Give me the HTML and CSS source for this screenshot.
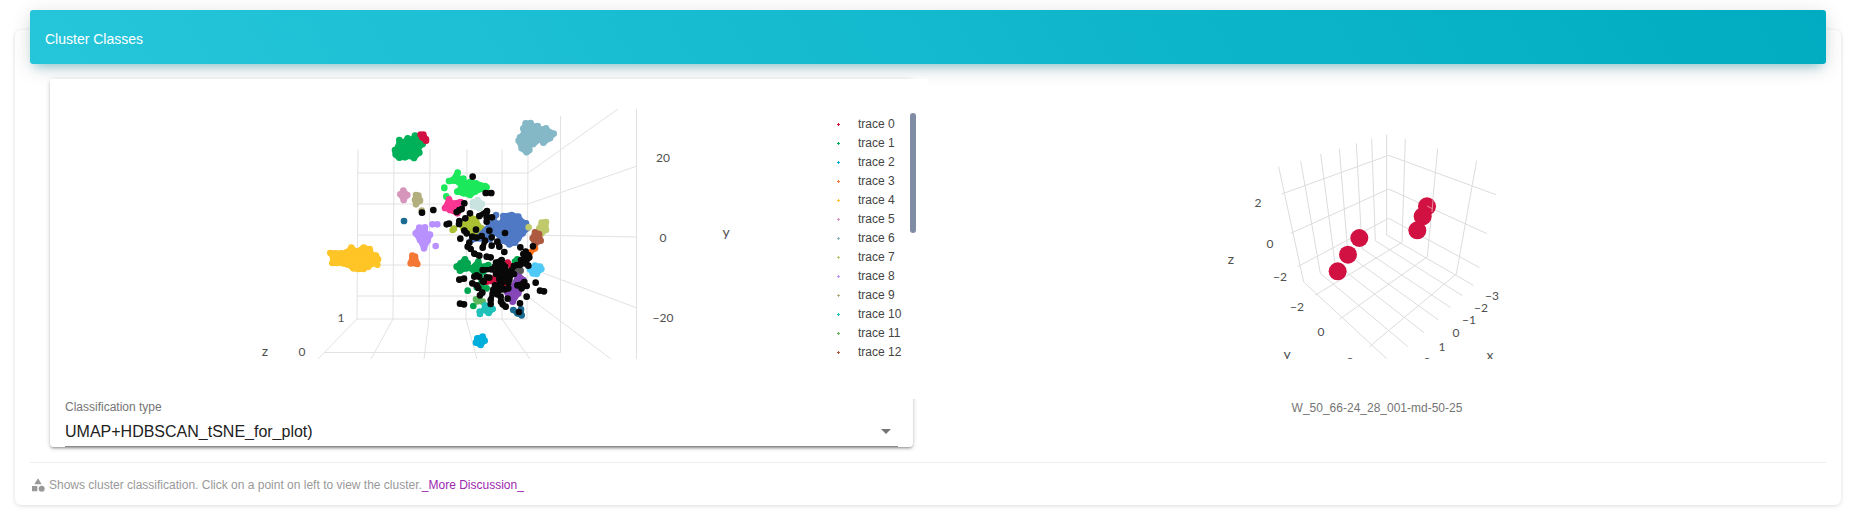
FILE: index.html
```html
<!DOCTYPE html>
<html lang="en">
<head>
<meta charset="utf-8">
<title>Cluster Classes</title>
<link rel="stylesheet" href="styles.css">
<script src="points.js" defer></script>
</head>
<body>
<main class="card">
  <header class="card-header"><h4 class="card-title">Cluster Classes</h4></header>
  <div class="card-body">
    <section class="column column-main">
      <div class="paper">
        <div class="plot">
          <svg class="scene" viewBox="50 109 780 250" role="img" aria-label="Cluster scatter plot">
            <g class="grid">
              <path d="M358 149L357 319M394 149L393 319M430 149L429 319M467 149L466 319M502 149V319M528 156L527 319M357 173H528M357 204H528M357 235H528M357 265H528M357 296H527M357 319H527"/>
              <path d="M560.500 116V352.500H324M636.500 109V359"/>
              <path d="M528 173L618 109M528 204L637 166M528 235L637 237M527 267L637 308M527 296L611 359M357 319L318 359M393 319L371 359M429 319L424 359M466 319L477 359M502 319L530 359"/>
            </g>
            <g class="axis">
              <text x="663" y="162">20</text><text x="663" y="242">0</text><text x="663" y="322">−20</text>
              <text x="341" y="322">1</text><text x="302" y="356">0</text>
              <text class="axis-title" x="726" y="237">y</text><text class="axis-title" x="265" y="356">z</text>
            </g>
            <g class="points" transform="translate(370 100) scale(.33333)">
              <path class="c-green" d="M75 150V165L88 173 105 172 120 168 132 174 148 158 145 145 158 132 150 115 135 107 125 120 113 115 100 128 88 120 85 140z"/>
              <path class="c-red" d="M152 104L160 104 168 118 168 122 156 112z"/>
              <path class="c-steel" d="M467 70L482 69 490 80 503 78 510 88 528 85 540 97 551 101 540 115 520 128 510 118 490 132 483 120 478 150 470 157 455 145 446 122 450 112 462 100 460 86z"/>
              <path class="c-lime" d="M223 263L223 264M229 289L229 290M237 243L248 240 263 218 263 235 280 236 282 250 300 246 318 250 345 258 350 262 315 275 300 285 280 280 262 275 275 260 262 244z"/>
              <path class="c-pink" d="M225 324L237 298 245 310 272 306 275 320 262 340 240 330z"/>
              <path class="c-pale" d="M323 300L336 312 328 325 309 318 309 307z"/>
              <path class="c-mauve" d="M100 272L112 285 101 300 91 283z"/>
              <path class="c-khaki" d="M138 285L145 287 150 302 138 313 135 300zM155 332h0"/>
              <path class="c-ocean" d="M102 363h0"/>
              <path class="c-violet" d="M187 373L202 373M197 438h0M148 383L165 382 168 402 180 404 173 422 162 445 150 420 137 400z"/>
              <path class="c-orange" d="M127 467L135 470 142 492 122 490z"/>
              <path class="c-yellow" d="M-119 459L-103 460 -88 460 -70 457 -56 443 -40 455 -19 443 -1 447 5 463 18 467 24 478 13 486 5 492 -5 500 -20 507 -35 507 -50 505 -68 493 -80 490 -98 489 -113 489 -110 475zM22 494h0"/>
              <path class="c-olive" d="M248 390L252 386M300 350L318 358 325 378 335 385 342 400 320 405 300 390 280 385 275 375z"/>
              <g transform="translate(210 180)">
                <path class="c-blue" d="M190 168L215 165 235 170 240 180 258 190 262 205 248 220 235 235 225 248 208 253 190 242 165 215 172 195 188 185zM168 165L160 180 165 215 150 238 120 235 95 240M170 190L150 200 150 225"/>
                <path class="c-moss" d="M266 202h0M305 188L318 186 318 210 305 220 298 205z"/>
                <path class="c-brown" d="M285 217L297 222 302 242 285 252 278 235z"/>
                <path class="c-amber" d="M285 265L270 278 262 285"/>
              </g>
              <g transform="translate(210 450)">
                <path class="c-forest" d="M50 50L62 40 75 28 83 40 78 55 60 62zM80 55L95 55 115 35 120 50 145 45 130 65 105 60 120 75 125 100 110 112 140 115M83 122h0M100 168h0M232 28L225 35"/>
                <path class="c-plum" d="M235 75L250 90 245 110 235 130 218 155 205 135 200 125 220 110z"/>
                <path class="c-red" d="M140 95L152 85 180 88 195 75 200 105 165 95zM203 38L215 50"/>
                <path class="c-grey" d="M232 55L242 62"/>
                <path class="c-sky" d="M285 47L300 50 304 57 290 72 278 70 270 58z"/>
                <path class="c-leaf" d="M108 148L128 155 112 154z"/>
                <path class="c-teal" d="M135 166L150 172 158 177 146 189 132 180zM119 185L120 192"/>
                <path class="c-ocean" d="M220 180L232 190 245 196 243 178"/>
                <path class="c-cyan" d="M112 265L128 260 134 272 122 285 108 278z"/>
              </g>
              <path class="c-black" d="M156 338h0M190 330h0"/>
              <path class="c-black" transform="translate(210 180)" d="M98 50h0M137 99L154 99M73 130h0M58 150L50 156M65 147h0M90 160h0M76 175h0M58 183L57 192M27 191L20 193M118 168L141 153M141 153L140 185M140 172L156 172M108 209h0M73 212L80 220M148 212h0M195 219h0M61 236h0M97 230L110 233M125 228h0M155 232h0M135 242L128 263M155 257h0M172 245L178 260M88 248L83 260 92 267M193 276h0M241 262h0M279 259h0M103 281L118 287M140 290L152 292M257 275L265 285 250 282 255 295"/>
              <path class="c-black" transform="translate(210 450)" d="M58 89L72 86M103 80L110 76 117 80M97 100h0M110 106L115 114M127 128L120 136M60 161L72 163M128 60L155 58 165 50 168 38 185 30M180 45L195 50 190 60 175 62 168 72M148 83L140 82M176 42L176 70M186 68L200 65 212 75 208 90 195 92 185 100M190 45L188 85M205 115L195 118 180 110 178 88M160 119L158 130 152 150 152 162M165 106L185 118M175 122L172 133M182 140L183 155 188 163 197 170M203 146h0M240 160h0M237 186h0M260 140h0M287 98h0M300 122L312 124M230 45L243 42 255 35 265 47M243 30L240 45M258 20L268 22 255 40M222 48L214 62 222 72M238 105L250 100 253 96 245 115M232 106h0M203 80L205 98M128 94L131 96M260 108h0"/>
            </g>
          </svg>
          <div class="legend">
            <ul class="legend-list">
              <li class="legend-item"><i class="mark c-red"></i>trace 0</li>
              <li class="legend-item"><i class="mark c-green"></i>trace 1</li>
              <li class="legend-item"><i class="mark c-cyan"></i>trace 2</li>
              <li class="legend-item"><i class="mark c-orange"></i>trace 3</li>
              <li class="legend-item"><i class="mark c-yellow"></i>trace 4</li>
              <li class="legend-item"><i class="mark c-mauve"></i>trace 5</li>
              <li class="legend-item"><i class="mark c-steel"></i>trace 6</li>
              <li class="legend-item"><i class="mark c-moss"></i>trace 7</li>
              <li class="legend-item"><i class="mark c-violet"></i>trace 8</li>
              <li class="legend-item"><i class="mark c-khaki"></i>trace 9</li>
              <li class="legend-item"><i class="mark c-teal"></i>trace 10</li>
              <li class="legend-item"><i class="mark c-leaf"></i>trace 11</li>
              <li class="legend-item"><i class="mark c-brown"></i>trace 12</li>
            </ul>
            <div class="legend-scroll"></div>
          </div>
        </div>
        <div class="field">
          <label class="field-label" for="type">Classification type</label>
          <select class="field-select" id="type"><option>UMAP+HDBSCAN_tSNE_for_plot)</option></select>
          <svg class="field-arrow" viewBox="0 0 24 24" aria-hidden="true"><path d="M7 10l5 5 5-5z"/></svg>
        </div>
      </div>
    </section>
    <section class="column column-detail">
      <svg class="scene-detail" viewBox="1127 109 500 250" role="img" aria-label="Selected cluster">
        <g class="grid grid-detail" transform="translate(1210 120) scale(.33333)">
          <path d="M206 140L281 486M272 122L331 460M332 102L375 430M388 86L414 405M439 70L456 385M485 56L496 362M530 44V345M586 58L576 367M683 86L652 410M800 122L739 462M215 222L536 106 858 224M242 340L536 207 831 341M263 440L536 295 809 443"/>
          <path d="M281 486L530 716M331 460L594 680M375 430L642 638M414 405L684 599M455 385L722 563M496 362L757 527M530 345L790 496M315 526L576 367M388 598L652 410M478 680L739 462"/>
        </g>
        <g class="balls" transform="translate(1210 120) scale(.33333)">
          <circle cx="383" cy="454" r="27"/><circle cx="414" cy="404" r="27"/><circle cx="448" cy="354" r="27"/>
          <circle cx="651" cy="259" r="27"/><circle cx="638" cy="289" r="27"/><circle cx="622" cy="331" r="27"/>
        </g>
        <path class="glint" d="M1427 206L1433 209M1433 200L1432 212"/>
        <g class="axis">
          <text x="1258" y="207">2</text><text x="1270" y="248">0</text><text x="1280" y="281">−2</text>
          <text x="1297" y="311">−2</text><text x="1321" y="336">0</text><text x="1350" y="366">2</text>
          <text x="1492" y="300">−3</text><text x="1481" y="312">−2</text><text x="1469" y="324">−1</text>
          <text x="1456" y="337">0</text><text x="1442" y="351">1</text><text x="1427" y="366">2</text>
          <text class="axis-title" x="1231" y="264">z</text><text class="axis-title" x="1287" y="359">y</text><text class="axis-title" x="1490" y="360">x</text>
        </g>
      </svg>
      <p class="caption">W_50_66-24_28_001-md-50-25</p>
    </section>
  </div>
  <footer class="card-footer">
    <svg class="footer-icon" viewBox="0 0 24 24" aria-hidden="true"><path d="M12 2l-5.500 9h11zM3 13.500h8v8H3z"/><circle cx="17.500" cy="17.500" r="4.500"/></svg>
    <p class="footer-text">Shows cluster classification. Click on a point on left to view the cluster.<a class="footer-link" href="#discussion">_More Discussion_</a></p>
  </footer>
</main>
</body>
</html>
```
FILE: points.js
```js
// Puts a round sample marker on every vertex of each cluster outline.
document.querySelectorAll('.points path').forEach(function (outline) {
  var vertices = outline.getAttribute('d').match(/-?\d+ -?\d+/g) || [];
  var dots = outline.cloneNode(false);
  dots.setAttribute('d', vertices.map(function (v) { return 'M' + v + 'h0'; }).join(''));
  dots.classList.add('dots');
  outline.after(dots);
});
```
FILE: styles.css
```css
* { box-sizing: border-box; }
body { margin: 0; padding: 10px 15px 8px; background: #fff; color: #222; font-family: "Liberation Sans", Arial, sans-serif; font-size: 12px; }
.card { display: flow-root; margin-top: 20px; border-radius: 6px; background: #fff; box-shadow: 0 1px 4px rgba(0, 0, 0, .14); }
.card-header { margin: -20px 15px 0; padding: 17px 15px 13px; border-radius: 3px; background: linear-gradient(60deg, #26c6da, #00acc1); box-shadow: 0 4px 20px rgba(0, 0, 0, .14), 0 7px 10px -5px rgba(0, 172, 193, .4); }
.card-title { margin: 0; color: #fff; font-size: 14px; font-weight: 400; line-height: 24px; }
.card-body { display: grid; grid-template-columns: 1fr 1fr; padding: 15px; }
.column { min-width: 0; }
.column-main { padding: 0 15px 0 20px; }
.paper { border-radius: 4px; background: #fff; box-shadow: 0 1px 5px rgba(0, 0, 0, .2), 0 2px 2px rgba(0, 0, 0, .14), 0 3px 1px -2px rgba(0, 0, 0, .12); }
.plot { display: flex; margin-right: -15px; padding: 30px 0 37px; background: #fff; }
.scene { flex: 1; min-width: 0; height: 250px; }
.grid { fill: none; stroke: #e2e2e2; stroke-width: 1; }
.grid-detail { stroke: #dcdcdc; stroke-width: 3; }
.axis { fill: #505050; font-family: Lato, sans-serif; font-size: 12px; text-anchor: middle; }
.axis-title { font-size: 14px; }
.points { stroke-width: 16; stroke-linecap: round; stroke-linejoin: round; }
.points path { fill: currentColor; stroke: currentColor; }
.points .c-black { fill: none; }
.points .dots { stroke-width: 20; }
.balls { fill: #d11141; }
.glint { fill: none; stroke: #e58ba2; stroke-width: 1; }
.c-red { color: #d11141; }
.c-green { color: #00b159; }
.c-cyan { color: #00aedb; }
.c-orange { color: #f37735; }
.c-yellow { color: #ffc425; }
.c-mauve { color: #d696bb; }
.c-steel { color: #85b8c7; }
.c-moss { color: #c0ca6c; }
.c-violet { color: #b991ff; }
.c-khaki { color: #b3ae7e; }
.c-teal { color: #20c1b9; }
.c-leaf { color: #5cb85c; }
.c-brown { color: #ae5a41; }
.c-lime { color: #1be95b; }
.c-pink { color: #f93692; }
.c-pale { color: #c9e3e0; }
.c-ocean { color: #1b6b93; }
.c-olive { color: #abc032; }
.c-blue { color: #4f79c4; }
.points .c-amber { color: #ff7119; fill: none; }
.c-forest { color: #00a64f; }
.c-plum { color: #8547b8; }
.c-grey { color: #555; }
.c-sky { color: #4fcaf7; }
.c-black { color: #080808; }
.legend { display: flex; flex: 0 0 98px; justify-content: space-between; padding: 4px 12px 0 7px; }
.legend-list { margin: 0; padding: 2px 0 0; color: #444; list-style: none; }
.legend-item { display: flex; align-items: center; gap: 18px; line-height: 19px; }
.mark { width: 3px; height: 3px; background: linear-gradient(currentColor, currentColor) center / 3px 1px no-repeat, linear-gradient(currentColor, currentColor) center / 1px 3px no-repeat; }
.legend-scroll { width: 6px; height: 120px; border-radius: 3px; background: #808ba4; }
.field { position: relative; padding: 0 15px; }
.field-label { display: block; color: #757575; line-height: 16px; }
.field-select { display: block; width: 100%; height: 32px; padding: 1px 24px 0 0; border: 0; border-bottom: 1px solid #8c8c8c; border-radius: 0; background: transparent; color: #212121; font: 16px "Liberation Sans", Arial, sans-serif; appearance: none; }
.field-arrow { position: absolute; right: 15px; bottom: 4px; width: 24px; height: 24px; fill: #757575; pointer-events: none; }
.column-detail { display: flex; flex-direction: column; align-items: center; padding: 30px 0 0; }
.scene-detail { width: 100%; height: 250px; }
.caption { margin: 0; padding-top: 41px; color: #757575; line-height: 16px; }
.card-footer { display: flex; align-items: center; gap: 3px; margin: 0 15px; padding: 13px 0 11px; border-top: 1px solid #eee; }
.footer-icon { width: 16px; height: 16px; fill: #999; }
.footer-text { margin: 0; color: #999; line-height: 18px; }
.footer-link { color: #9c27b0; text-decoration: none; }
```
